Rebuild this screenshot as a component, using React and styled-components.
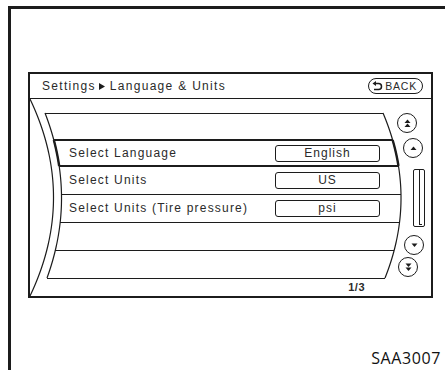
import React from 'react';
import styled, { createGlobalStyle } from 'styled-components';

const INK = '#1c1c1c';
const TEXT = '#2a2a2a';

const GlobalStyle = createGlobalStyle`
  html, body {
    margin: 0;
    padding: 0;
    background: #fff;
  }
  body {
    font-family: "Liberation Sans", Arial, sans-serif;
    color: ${TEXT};
  }
`;

// curve geometry, in list coordinates (origin = top-left of the list area)
const OUTER = { x0: 0, y0: 0, cx: 47, x2: 0, y2: 197 };
const INNER = { x0: 15, y0: 14, cx: 47, x2: 17, y2: 179 };
const RIGHT = { x0: 353, y0: 14, cx: 388, x2: 355, y2: 179 };
const LIST_W = 368;

function xAt(c, y) {
    const t = (y - c.y0) / (c.y2 - c.y0);
    return (1 - t) * (1 - t) * c.x0 + 2 * t * (1 - t) * c.cx + t * t * c.x2;
}

function curvePath(c, from = c.y0, to = c.y2) {
    const pts = [];
    for (let y = from; y <= to; y += 1) pts.push(`${xAt(c, y).toFixed(2)},${y}`);
    return 'M' + pts.join(' L');
}

const rows = [
    { h: 27 },
    { h: 26, label: 'Select Language', value: 'English', selected: true },
    { h: 28, label: 'Select Units', value: 'US', thick: true },
    { h: 28, label: 'Select Units (Tire pressure)', value: 'psi' },
    { h: 28 },
    { h: 28 },
];

const Frame = styled.div`
    margin: 6px 0 0 8px;
    height: 364px;
    box-sizing: border-box;
    border-top: 3px solid ${INK};
    border-left: 3px solid ${INK};
    padding: 63px 0 0 17px;
    overflow: hidden;
`;

const Screen = styled.div`
    width: 405px;
    height: 226px;
    box-sizing: border-box;
    border: 2px solid ${INK};
    display: flex;
    flex-direction: column;
`;

const Header = styled.div`
    height: 25px;
    box-sizing: border-box;
    border-bottom: 1px solid ${INK};
    display: flex;
    align-items: center;
    justify-content: space-between;
    padding: 0 8px 0 12px;
`;

const Title = styled.div`
    font-size: 12px;
    letter-spacing: 1.3px;
    display: flex;
    align-items: center;
    white-space: nowrap;
`;

const Crumb = styled.svg`
    width: 6px;
    height: 7px;
    margin: 0 5px 0 3px;
`;

const BackButton = styled.div`
    height: 16px;
    box-sizing: border-box;
    border: 1.5px solid ${INK};
    border-radius: 8px;
    display: flex;
    align-items: center;
    gap: 2px;
    padding: 0 5px 0 3px;
    font-size: 10.5px;
    letter-spacing: 0.8px;
`;

const Body = styled.div`
    flex: 1;
    display: flex;
`;

const ListArea = styled.div`
    position: relative;
    width: ${LIST_W}px;
    padding-top: 14px;
    box-sizing: border-box;
`;

const Outline = styled.svg`
    position: absolute;
    left: 0;
    top: 0;
    width: 100%;
    height: 100%;
    overflow: visible;
    pointer-events: none;
`;

const Row = styled.div`
    position: relative;
    height: ${p => p.$h}px;
    box-sizing: border-box;
    display: flex;
    align-items: center;
    padding: 0 18px 0 39px;
    font-size: 12px;
    letter-spacing: 1.2px;

    &::before {
        content: '';
        position: absolute;
        top: ${p => (p.$thick ? -1 : 0)}px;
        left: ${p => p.$l}px;
        right: ${p => p.$r}px;
        border-top: ${p => (p.$thick ? 2 : 1)}px solid ${INK};
    }
`;

const Label = styled.span`
    flex: 1;
    white-space: nowrap;
`;

const ValueBox = styled.div`
    width: 105px;
    height: 17px;
    box-sizing: border-box;
    border: 1.5px solid ${INK};
    border-radius: 3px;
    display: flex;
    align-items: center;
    justify-content: center;
    letter-spacing: 1px;
`;

const Pager = styled.div`
    height: 18px;
    display: flex;
    align-items: center;
    justify-content: flex-end;
    padding-right: 33px;
    font-size: 11px;
    font-weight: bold;
    letter-spacing: 0.5px;
`;

const ScrollCol = styled.div`
    flex: 1;
    display: flex;
    flex-direction: column;
`;

const RoundButton = styled.div`
    width: 20px;
    height: 20px;
    box-sizing: border-box;
    border: 1.5px solid ${INK};
    border-radius: 50%;
    display: flex;
    align-items: center;
    justify-content: center;
    margin-top: ${p => p.$mt}px;
    margin-left: ${p => p.$ml}px;
`;

const Track = styled.div`
    position: relative;
    width: 12px;
    height: 58px;
    box-sizing: border-box;
    border: 1.5px solid ${INK};
    border-top-width: 1px;
    border-radius: 2px;
    margin-top: 11px;
    margin-left: 15px;

    &::after {
        content: '';
        position: absolute;
        top: 0;
        bottom: 1px;
        right: 2px;
        width: 2px;
        border-left: 1.5px solid ${INK};
        border-bottom: 1px solid ${INK};
    }
`;

const Caption = styled.div`
    margin-top: 52px;
    padding-right: 4px;
    text-align: right;
    font-family: "Open Sans", "Noto Sans", sans-serif;
    font-size: 16px;
    line-height: 16px;
    letter-spacing: 0.6px;
    color: #111;
`;

const Tri = ({ dir = 'up', double }) => {
    const up = dir === 'up';
    const one = (y) =>
        up ? `4.5,${y} 7.5,${y + 3.5} 1.5,${y + 3.5}` : `1.5,${y} 7.5,${y} 4.5,${y + 3.5}`;
    return (
        <svg width="9" height="9" viewBox="0 0 9 9">
            {double ? (
                <>
                    <polygon points={one(0.5)} fill={INK} />
                    <polygon points={one(4.5)} fill={INK} />
                </>
            ) : (
                <polygon points={one(2.5)} fill={INK} />
            )}
        </svg>
    );
};

const ReturnIcon = () => (
    <svg width="11" height="10" viewBox="0 0 11 10">
        <path d="M3.5 2.5 H6.5 A3 3 0 0 1 6.5 8.5 H2" fill="none" stroke={INK} strokeWidth="1.5" />
        <polygon points="0.5,2.5 4,0 4,5" fill={INK} />
    </svg>
);

export default function App() {
    let top = 14;
    const tops = rows.map(r => {
        const t = top;
        top += r.h;
        return t;
    });
    const endY = top;
    const sel = rows.findIndex(r => r.selected);
    const selTop = tops[sel];
    const selBottom = tops[sel] + rows[sel].h;

    return (
        <>
            <GlobalStyle />
            <Frame>
                <Screen>
                    <Header>
                        <Title>
                            Settings
                            <Crumb viewBox="0 0 6 7">
                                <polygon points="0,0 6,3.5 0,7" fill={INK} />
                            </Crumb>
                            Language &amp; Units
                        </Title>
                        <BackButton>
                            <ReturnIcon />
                            BACK
                        </BackButton>
                    </Header>
                    <Body>
                        <ListArea>
                            <Outline>
                                <path d={curvePath(OUTER)} fill="none" stroke={INK} strokeWidth="1.2" />
                                <path d={curvePath(INNER)} fill="none" stroke={INK} strokeWidth="1.2" />
                                <path d={curvePath(RIGHT)} fill="none" stroke={INK} strokeWidth="1.2" />
                                <path d={curvePath(INNER, selTop, selBottom)} fill="none" stroke={INK} strokeWidth="2.4" />
                                <path d={curvePath(RIGHT, selTop, selBottom)} fill="none" stroke={INK} strokeWidth="2.4" />
                            </Outline>
                            {rows.map((r, i) => (
                                <Row
                                    key={i}
                                    $h={r.h}
                                    $thick={r.selected || r.thick}
                                    $l={xAt(INNER, tops[i])}
                                    $r={LIST_W - xAt(RIGHT, tops[i])}
                                >
                                    {r.label && <Label>{r.label}</Label>}
                                    {r.value && <ValueBox>{r.value}</ValueBox>}
                                </Row>
                            ))}
                            <Row $h={0} $l={xAt(INNER, endY)} $r={LIST_W - xAt(RIGHT, endY)} />
                            <Pager>1/3</Pager>
                        </ListArea>
                        <ScrollCol>
                            <RoundButton $mt={14} $ml={-1}>
                                <Tri dir="up" double />
                            </RoundButton>
                            <RoundButton $mt={5} $ml={5}>
                                <Tri dir="up" />
                            </RoundButton>
                            <Track />
                            <RoundButton $mt={8} $ml={6}>
                                <Tri dir="down" />
                            </RoundButton>
                            <RoundButton $mt={2} $ml={0}>
                                <Tri dir="down" double />
                            </RoundButton>
                        </ScrollCol>
                    </Body>
                </Screen>
                <Caption>SAA3007</Caption>
            </Frame>
        </>
    );
}
